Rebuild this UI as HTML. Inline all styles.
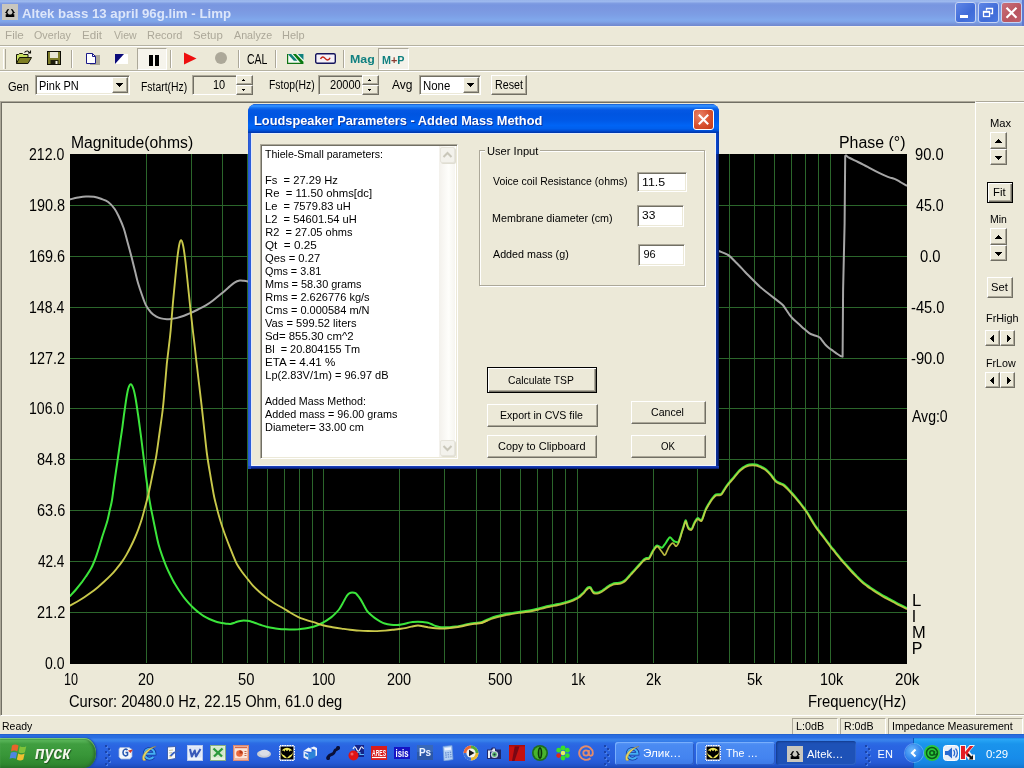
<!DOCTYPE html>
<html lang="en"><head><meta charset="utf-8"><title>Altek bass 13 april 96g.lim - Limp</title>
<style>

html,body{margin:0;padding:0}
body{width:1024px;height:768px;position:relative;overflow:hidden;background:#ECE9D8;font-family:"Liberation Sans",sans-serif;font-size:11px;color:#000}
div,span,svg{position:absolute;box-sizing:border-box}
.t{white-space:pre;transform-origin:0 50%;display:block}
/* classic raised button */
.btn{background:#ECE9D8;border:1px solid;border-color:#fff #716F64 #716F64 #fff;box-shadow:inset -1px -1px 0 #ACA899}
.btnd{background:#ECE9D8;border:1px solid #000;box-shadow:inset 1px 1px 0 #fff,inset -1px -1px 0 #716F64,inset -2px -2px 0 #ACA899}
.sunk{border:1px solid;border-color:#ACA899 #fff #fff #ACA899;box-shadow:inset 1px 1px 0 #716F64,inset -1px -1px 0 #ECE9D8}
.sunk1{border:1px solid;border-color:#ACA899 #fff #fff #ACA899}
.sep{width:2px;border-left:1px solid #ACA899;border-right:1px solid #fff}
.sh{text-shadow:1px 1px 0 #0C36A0}
.sh2{text-shadow:1px 1px 1px #1C501C}
.arr{width:0;height:0;border:4px solid transparent}

</style></head>
<body>
<div id="screen" style="left:0;top:0;width:1024px;height:768px;will-change:transform">
<div id="titlebar" style="left:0;top:0;width:1024px;height:26px;background:linear-gradient(#98B4EA 0,#9CB8EE 1.500px,#7F9CE2 3.500px,#7896E0 5px,#7B98E1 10px,#7D9EE5 15px,#80A8EC 20px,#7DA2E6 22px,#7792D8 24px,#6E88CE 26px)">
<div style="left:2px;top:4px;width:16px;height:16px;background:#C8C6BE"></div>
<svg style="left:2px;top:4px" width="16" height="16" viewBox="0 0 16 16"><path d="M6.800 5.600C4.600 5.400 5.400 8 4.300 8.500 5.400 9.200 5.200 10.400 6.400 11H4.400v1.200H7.300V10.600M9.200 5.600c2.200-.2 1.400 2.400 2.500 2.900-1.100.7-.9 1.900-2.100 2.500h2V12.200H8.700V10.600" fill="none" stroke="#000" stroke-width="1.400"/></svg>
<span class="t" style="left:22.3px;top:6px;font-size:13.5px;line-height:15px;font-weight:bold;color:#DCE6FA;transform:scaleX(0.9811);">Altek bass 13 april 96g.lim - Limp</span>
<div style="left:955px;top:2px;width:21px;height:21px;border:1px solid #C5D3F3;border-radius:3px;background:linear-gradient(135deg,#5F86E6,#3F6BD8 60%,#4A78E0)"></div>
<div style="left:978px;top:2px;width:21px;height:21px;border:1px solid #C5D3F3;border-radius:3px;background:linear-gradient(135deg,#5F86E6,#3F6BD8 60%,#4A78E0)"></div>
<div style="left:1001px;top:2px;width:21px;height:21px;border:1px solid #C5D3F3;border-radius:3px;background:linear-gradient(135deg,#C9707A,#B95560 60%,#C0606A)"></div>
<div style="left:960px;top:15px;width:8px;height:3px;background:#fff"></div>
<svg style="left:978px;top:3px" width="21" height="21"><path d="M8.500 7.500V5.500h6v5h-2" fill="none" stroke="#fff" stroke-width="1.300"/><rect x="5.500" y="8.500" width="6" height="5" fill="none" stroke="#fff" stroke-width="1.300"/><path d="M5.500 9h6" stroke="#fff" stroke-width="1.600"/></svg>
<svg style="left:1001px;top:3px" width="21" height="21"><path d="M5.500 4.800l10 10M15.500 4.800l-10 10" stroke="#fff" stroke-width="2.200"/></svg>
<div style="left:1022px;top:0;width:2px;height:26px;background:#5D79CF"></div>
</div>
<div style="left:0;top:26px;width:1024px;height:1px;background:#F4F0E8"></div>
<div id="menubar" style="left:0;top:26px;width:1024px;height:20px">
<span class="t" style="left:4.94px;top:3px;font-size:11px;line-height:12px;color:#ACA899;transform:scaleX(1.0625);">File</span>
<span class="t" style="left:34px;top:3px;font-size:11px;line-height:12px;color:#ACA899;transform:scaleX(0.9737);">Overlay</span>
<span class="t" style="left:81.94px;top:3px;font-size:11px;line-height:12px;color:#ACA899;transform:scaleX(1.0556);">Edit</span>
<span class="t" style="left:114px;top:3px;font-size:11px;line-height:12px;color:#ACA899;transform:scaleX(0.9583);">View</span>
<span class="t" style="left:147px;top:3px;font-size:11px;line-height:12px;color:#ACA899;">Record</span>
<span class="t" style="left:192.96px;top:3px;font-size:11px;line-height:12px;color:#ACA899;transform:scaleX(1.0370);">Setup</span>
<span class="t" style="left:234px;top:3px;font-size:11px;line-height:12px;color:#ACA899;transform:scaleX(0.9744);">Analyze</span>
<span class="t" style="left:282px;top:3px;font-size:11px;line-height:12px;color:#ACA899;">Help</span>
</div>
<div style="left:0;top:46px;width:1024px;height:1px;background:#fff"></div>
<div style="left:0;top:45px;width:1024px;height:1px;background:#B4B1A1"></div>
<div id="toolbar1" style="left:0;top:47px;width:1024px;height:24px">
<div style="left:3px;top:2px;width:3px;height:20px;border-left:1px solid #fff;border-right:1px solid #ACA899"></div>
<svg style="left:15px;top:3px" width="18" height="15" viewBox="0 0 18 15"><path d="M1.500 13.500V4.500h2l1-1h3l1 1h4.500v2.500" fill="#C8E060" stroke="#141408" stroke-width="1"/><path d="M1.500 13.500l3-6h12l-3.500 6z" fill="#7E7E22" stroke="#141408" stroke-width="1"/><path d="M9.500 2.500c1.500-2 3.800-2 5 0M15.500 .5v2.500h-2.500" fill="none" stroke="#101008" stroke-width="1.100"/></svg>
<svg style="left:47px;top:4px" width="14" height="14" viewBox="0 0 14 14"><rect x=".5" y=".5" width="13" height="13" fill="#7C7C28" stroke="#0C0C04"/><rect x="3" y="1" width="8" height="6" fill="#E8E6D4"/><rect x="3.500" y="9" width="8" height="4.500" fill="#1C1C0C"/><rect x="8.500" y="10" width="2" height="3" fill="#F4F2E4"/></svg>
<div class="sep" style="left:71px;top:3px;height:18px"></div>
<svg style="left:85px;top:5px" width="16" height="14" viewBox="0 0 16 14"><rect x="5" y="3" width="10" height="10" fill="#ACA899"/><path d="M1.500 1.500h6l3 3v7h-9z" fill="#fff" stroke="#1a1a8a"/><path d="M7.500 1.500v3h3" fill="none" stroke="#1a1a8a"/></svg>
<svg style="left:115px;top:7px" width="13" height="10" viewBox="0 0 13 10"><rect width="13" height="10" fill="#fff"/><path d="M0 0h9L0 10z" fill="#0A0A7A"/></svg>
<div style="left:137px;top:1px;width:30px;height:22px;border:1px solid;border-color:#ACA899 #fff #fff #ACA899;background:#F6F4EC"></div>
<div style="left:149px;top:8px;width:4px;height:11px;background:#000"></div><div style="left:155px;top:8px;width:4px;height:11px;background:#000"></div>
<div class="sep" style="left:170px;top:3px;height:18px"></div>
<svg style="left:184px;top:5px" width="13" height="13"><path d="M0 .5l12.500 6L0 12.500z" fill="#EE0F0F"/></svg>
<div style="left:215px;top:5px;width:12px;height:12px;border-radius:6px;background:#ACA899"></div>
<div class="sep" style="left:238px;top:3px;height:18px"></div>
<span class="t" style="left:246.85px;top:4px;font-size:14px;line-height:16px;transform:scaleX(0.7500);">CAL</span>
<div class="sep" style="left:275px;top:3px;height:18px"></div>
<svg style="left:287px;top:7px" width="17" height="10" viewBox="0 0 17 10"><rect width="17" height="10" fill="#F4FAF4"/><path d="M.8 0h3.400l6.200 6.700H6.800z" fill="#108078"/><path d="M5.800 0h3.200l7.500 7.800V10h-2z" fill="#0C7A10"/><path d="M10.800 0H16.500v6z" fill="#10807C"/><path d="M.6 0v9.400H15" fill="none" stroke="#107414" stroke-width="1.200"/></svg>
<svg style="left:315px;top:6px" width="21" height="11" viewBox="0 0 21 11"><rect x=".7" y=".7" width="19.600" height="9.600" rx="1.500" fill="#F5F1F8" stroke="#14145C" stroke-width="1.400"/><path d="M5.500 6c1.200-2.600 3-2.600 4.600-.6s3.600 2.400 5-.6" fill="none" stroke="#C42414" stroke-width="1.400"/></svg>
<div class="sep" style="left:343px;top:3px;height:18px"></div>
<span class="t" style="left:349.88px;top:6px;font-size:11px;line-height:12px;font-weight:bold;color:#108080;transform:scaleX(1.1250);">Mag</span>
<div style="left:378px;top:1px;width:31px;height:22px;border:1px solid;border-color:#ACA899 #fff #fff #ACA899;background:#F4F2EA"></div>
<span class="t" style="left:382.42px;top:7px;font-size:11px;line-height:12px;font-weight:bold;color:#108080;transform:scaleX(0.9818);">M<span style="position:static;color:#8A3A30">+</span>P</span>
</div>
<div style="left:0;top:71px;width:1024px;height:1px;background:#fff"></div>
<div style="left:0;top:70px;width:1024px;height:1px;background:#B4B1A1"></div>
<div id="toolbar2" style="left:0;top:72px;width:1024px;height:28px">
<span class="t" style="left:7.81px;top:8px;font-size:12.5px;line-height:14px;transform:scaleX(0.8864);">Gen</span>
<div class="sunk" style="left:35px;top:3px;width:95px;height:20px;background:#fff"></div>
<span class="t" style="left:38.62px;top:7px;font-size:12.5px;line-height:14px;transform:scaleX(0.8791);">Pink PN</span>
<div class="btn" style="left:112px;top:5px;width:16px;height:16px"></div><div style="left:116px;top:11px;width:7px;height:1px;background:#000"></div><div style="left:117px;top:12px;width:5px;height:1px;background:#000"></div><div style="left:118px;top:13px;width:3px;height:1px;background:#000"></div><div style="left:119px;top:14px;width:1px;height:1px;background:#000"></div>
<span class="t" style="left:140.67px;top:8px;font-size:12.5px;line-height:14px;transform:scaleX(0.8333);">Fstart(Hz)</span>
<div class="sunk" style="left:192px;top:3px;width:45px;height:20px"></div>
<span class="t" style="left:212.82px;top:6px;font-size:12.5px;line-height:14px;transform:scaleX(0.8769);">10</span>
<div class="btn" style="left:236px;top:3px;width:17px;height:10px"></div><div class="btn" style="left:236px;top:13px;width:17px;height:10px"></div>
<div style="left:243px;top:7px;width:1px;height:1px;background:#000"></div><div style="left:242px;top:8px;width:3px;height:1px;background:#000"></div><div style="left:242px;top:17px;width:3px;height:1px;background:#000"></div><div style="left:243px;top:18px;width:1px;height:1px;background:#000"></div>
<span class="t" style="left:269.07px;top:6px;font-size:12.5px;line-height:14px;transform:scaleX(0.8321);">Fstop(Hz)</span>
<div class="sunk" style="left:318px;top:3px;width:46px;height:20px"></div>
<span class="t" style="left:330.32px;top:6px;font-size:12.5px;line-height:14px;transform:scaleX(0.8848);">20000</span>
<div class="btn" style="left:362px;top:3px;width:17px;height:10px"></div><div class="btn" style="left:362px;top:13px;width:17px;height:10px"></div>
<div style="left:369px;top:7px;width:1px;height:1px;background:#000"></div><div style="left:368px;top:8px;width:3px;height:1px;background:#000"></div><div style="left:368px;top:17px;width:3px;height:1px;background:#000"></div><div style="left:369px;top:18px;width:1px;height:1px;background:#000"></div>
<span class="t" style="left:392px;top:6px;font-size:12.5px;line-height:14px;transform:scaleX(0.9600);">Avg</span>
<div class="sunk" style="left:419px;top:3px;width:62px;height:20px;background:#fff"></div>
<span class="t" style="left:422.59px;top:7px;font-size:12.5px;line-height:14px;transform:scaleX(0.9143);">None</span>
<div class="btn" style="left:463px;top:5px;width:16px;height:16px"></div><div style="left:467px;top:11px;width:7px;height:1px;background:#000"></div><div style="left:468px;top:12px;width:5px;height:1px;background:#000"></div><div style="left:469px;top:13px;width:3px;height:1px;background:#000"></div><div style="left:470px;top:14px;width:1px;height:1px;background:#000"></div>
<div class="btn" style="left:491px;top:3px;width:36px;height:20px"></div>
<span class="t" style="left:494.74px;top:6px;font-size:12.5px;line-height:14px;transform:scaleX(0.8562);">Reset</span>
</div>
<div id="view" style="left:0;top:101px;width:976px;height:615px;border:1px solid;border-color:#ACA899 #fff #fff #ACA899;box-shadow:inset 1px 1px 0 #716F64"></div>
<div style="left:976px;top:101px;width:48px;height:1px;background:#ACA899"></div><div style="left:976px;top:102px;width:48px;height:1px;background:#fff"></div>
<div style="left:976px;top:714px;width:48px;height:1px;background:#ACA899"></div><div style="left:976px;top:715px;width:48px;height:1px;background:#fff"></div>
<div id="side" style="left:976px;top:102px;width:48px;height:612px">
<span class="t" style="left:13.68px;top:15px;font-size:11px;line-height:12px;transform:scaleX(1.0158);">Max</span>
<div class="btn" style="left:14px;top:30px;width:17px;height:17px"></div><div class="btn" style="left:14px;top:47px;width:17px;height:16px"></div>
<div style="left:22px;top:37px;width:1px;height:1px;background:#000"></div><div style="left:21px;top:38px;width:3px;height:1px;background:#000"></div><div style="left:20px;top:39px;width:5px;height:1px;background:#000"></div><div style="left:19px;top:40px;width:7px;height:1px;background:#000"></div><div style="left:19px;top:54px;width:7px;height:1px;background:#000"></div><div style="left:20px;top:55px;width:5px;height:1px;background:#000"></div><div style="left:21px;top:56px;width:3px;height:1px;background:#000"></div><div style="left:22px;top:57px;width:1px;height:1px;background:#000"></div>
<div class="btnd" style="left:11px;top:80px;width:26px;height:21px"></div>
<span class="t" style="left:16.67px;top:84px;font-size:11px;line-height:12px;transform:scaleX(1.0273);">Fit</span>
<span class="t" style="left:14.05px;top:111px;font-size:11px;line-height:12px;transform:scaleX(0.9500);">Min</span>
<div class="btn" style="left:14px;top:126px;width:17px;height:17px"></div><div class="btn" style="left:14px;top:143px;width:17px;height:16px"></div>
<div style="left:22px;top:133px;width:1px;height:1px;background:#000"></div><div style="left:21px;top:134px;width:3px;height:1px;background:#000"></div><div style="left:20px;top:135px;width:5px;height:1px;background:#000"></div><div style="left:19px;top:136px;width:7px;height:1px;background:#000"></div><div style="left:19px;top:150px;width:7px;height:1px;background:#000"></div><div style="left:20px;top:151px;width:5px;height:1px;background:#000"></div><div style="left:21px;top:152px;width:3px;height:1px;background:#000"></div><div style="left:22px;top:153px;width:1px;height:1px;background:#000"></div>
<div class="btn" style="left:11px;top:175px;width:26px;height:21px"></div>
<span class="t" style="left:14.98px;top:179px;font-size:11px;line-height:12px;transform:scaleX(1.0200);">Set</span>
<span class="t" style="left:9.81px;top:210px;font-size:11px;line-height:12px;transform:scaleX(0.9871);">FrHigh</span>
<div class="btn" style="left:9px;top:228px;width:15px;height:16px"></div><div class="btn" style="left:24px;top:228px;width:15px;height:16px"></div>
<div style="left:14px;top:236px;width:1px;height:1px;background:#000"></div><div style="left:15px;top:235px;width:1px;height:3px;background:#000"></div><div style="left:16px;top:234px;width:1px;height:5px;background:#000"></div><div style="left:17px;top:233px;width:1px;height:7px;background:#000"></div><div style="left:31px;top:233px;width:1px;height:7px;background:#000"></div><div style="left:32px;top:234px;width:1px;height:5px;background:#000"></div><div style="left:33px;top:235px;width:1px;height:3px;background:#000"></div><div style="left:34px;top:236px;width:1px;height:1px;background:#000"></div>
<span class="t" style="left:9.83px;top:255px;font-size:11px;line-height:12px;transform:scaleX(0.9724);">FrLow</span>
<div class="btn" style="left:9px;top:270px;width:15px;height:16px"></div><div class="btn" style="left:24px;top:270px;width:15px;height:16px"></div>
<div style="left:14px;top:278px;width:1px;height:1px;background:#000"></div><div style="left:15px;top:277px;width:1px;height:3px;background:#000"></div><div style="left:16px;top:276px;width:1px;height:5px;background:#000"></div><div style="left:17px;top:275px;width:1px;height:7px;background:#000"></div><div style="left:31px;top:275px;width:1px;height:7px;background:#000"></div><div style="left:32px;top:276px;width:1px;height:5px;background:#000"></div><div style="left:33px;top:277px;width:1px;height:3px;background:#000"></div><div style="left:34px;top:278px;width:1px;height:1px;background:#000"></div>
</div>
<div id="statusbar" style="left:0;top:716px;width:1024px;height:18px">
<span class="t" style="left:1.55px;top:4px;font-size:11px;line-height:12px;transform:scaleX(0.9516);">Ready</span>
<div class="sunk1" style="left:792px;top:2px;width:46px;height:17px"></div>
<span class="t" style="left:795.72px;top:4px;font-size:11px;line-height:12px;transform:scaleX(0.9815);">L:0dB</span>
<div class="sunk1" style="left:840px;top:2px;width:46px;height:17px"></div>
<span class="t" style="left:843.83px;top:4px;font-size:11px;line-height:12px;transform:scaleX(0.9655);">R:0dB</span>
<div class="sunk1" style="left:888px;top:2px;width:135px;height:17px"></div>
<span class="t" style="left:891.73px;top:4px;font-size:11px;line-height:12px;transform:scaleX(0.9677);">Impedance Measurement</span>
</div>
<div id="graph" style="left:70px;top:154px;width:837px;height:510px;background:#000"></div>
<svg id="plot" style="left:0;top:0" width="1024" height="768" viewBox="0 0 1024 768">
<clipPath id="gc"><rect x="70" y="154" width="837" height="509"/></clipPath>
<g clip-path="url(#gc)" fill="none" stroke-linejoin="round" stroke-linecap="round">
<path d="M146.5 154 V663 M191.5 154 V663 M222.5 154 V663 M247.5 154 V663 M267.5 154 V663 M284.5 154 V663 M299.5 154 V663 M312.5 154 V663 M323.5 154 V663 M399.5 154 V663 M444.5 154 V663 M476.5 154 V663 M500.5 154 V663 M520.5 154 V663 M537.5 154 V663 M552.5 154 V663 M565.5 154 V663 M577.5 154 V663 M653.5 154 V663 M697.5 154 V663 M729.5 154 V663 M754.5 154 V663 M774.5 154 V663 M791.5 154 V663 M805.5 154 V663 M818.5 154 V663 M830.5 154 V663 M70 205.5 H907 M70 256.5 H907 M70 307.5 H907 M70 358.5 H907 M70 408.5 H907 M70 459.5 H907 M70 510.5 H907 M70 561.5 H907 M70 612.5 H907" stroke="#2B662B" stroke-width="1" shape-rendering="crispEdges"/>
<path d="M70.0 199.4C71.3 199.1 75.3 198.1 78.0 197.6C80.7 197.1 83.3 196.6 86.0 196.5C88.7 196.4 91.5 196.4 94.0 196.8C96.5 197.2 98.6 197.9 101.0 198.8C103.4 199.7 105.9 200.3 108.2 202.0C110.5 203.7 112.9 206.5 114.7 209.0C116.5 211.5 117.5 213.8 119.0 217.0C120.5 220.2 122.4 224.3 123.8 228.5C125.2 232.7 126.2 237.2 127.5 242.0C128.8 246.8 130.3 252.4 131.6 257.2C132.8 262.0 133.9 266.7 135.0 271.0C136.1 275.3 136.9 279.2 138.1 283.2C139.3 287.2 140.7 291.3 142.0 295.0C143.3 298.7 144.5 302.5 146.0 305.4C147.5 308.3 149.3 310.6 151.0 312.5C152.7 314.4 154.7 315.6 156.4 316.6C158.1 317.6 159.3 318.0 161.0 318.4C162.7 318.8 165.0 319.1 166.8 319.2C168.6 319.3 170.3 319.0 172.0 318.8C173.7 318.6 175.2 318.4 177.2 317.9C179.2 317.4 181.8 316.5 184.0 315.7C186.2 314.9 187.9 314.2 190.2 313.2C192.5 312.2 195.4 310.8 198.0 309.5C200.6 308.2 203.3 306.9 205.8 305.4C208.3 303.9 210.4 302.5 213.0 300.5C215.6 298.5 219.0 295.7 221.5 293.6C224.0 291.5 225.8 289.8 228.0 288.0C230.2 286.2 232.6 283.9 234.5 282.7C236.4 281.5 238.1 280.9 239.7 280.6C241.3 280.3 242.3 280.6 244.0 280.8C245.7 281.0 249.0 281.8 250.0 282.0" stroke="#A6A6A6" stroke-width="2"/>
<path d="M712.0 249.0C713.2 249.4 716.8 250.3 719.5 251.3C722.2 252.3 725.6 253.3 728.4 255.2C731.1 257.1 733.2 259.8 736.0 262.5C738.8 265.2 742.2 268.9 744.9 271.7C747.6 274.4 749.5 276.5 752.0 279.0C754.5 281.5 757.4 284.4 759.9 286.7C762.4 288.9 764.5 290.5 767.0 292.5C769.5 294.5 772.2 296.6 774.8 298.6C777.3 300.6 780.4 302.8 782.3 304.6C784.2 306.4 784.8 307.8 786.0 309.5C787.2 311.2 788.5 313.4 789.8 315.1C791.1 316.8 792.5 318.3 794.0 319.8C795.5 321.3 797.1 322.6 798.8 324.1C800.5 325.6 802.3 327.3 804.0 328.8C805.7 330.3 807.5 332.0 809.2 333.1C810.9 334.2 812.2 334.5 814.0 335.2C815.8 335.9 818.3 336.5 819.7 337.5C821.1 338.5 821.5 339.8 822.5 341.0C823.5 342.2 824.6 343.8 825.7 345.0C826.8 346.2 827.8 347.0 829.0 348.0C830.2 349.0 831.9 350.0 833.2 351.0C834.5 352.0 835.8 352.9 837.0 353.8C838.2 354.7 839.8 355.6 840.7 356.1C841.6 356.6 842.3 356.5 842.6 356.6 L842.6 356.6L843.1 289.7L844.6 223.8L845.2 156.0L846.0 155.4 L846.0 155.4C846.6 155.8 847.7 156.9 849.7 158.0C851.7 159.1 855.0 160.5 858.0 162.0C861.0 163.5 864.6 165.3 867.6 166.9C870.6 168.5 873.0 169.8 876.0 171.3C879.0 172.8 883.3 174.9 885.6 175.9C887.9 176.9 888.5 177.1 890.0 177.6C891.5 178.1 892.8 178.2 894.5 178.9C896.2 179.6 898.0 180.7 900.0 181.8C902.0 182.9 905.4 184.9 906.5 185.5" stroke="#A6A6A6" stroke-width="2"/>
<path d="M70.0 596.0C71.0 594.9 74.0 591.9 76.0 589.5C78.0 587.1 80.3 584.2 82.1 581.9C83.8 579.6 85.0 577.8 86.5 575.6C88.0 573.4 89.8 570.8 91.0 568.6C92.2 566.4 92.9 564.7 93.8 562.5C94.7 560.3 95.6 557.9 96.5 555.3C97.4 552.7 98.3 550.0 99.2 547.0C100.1 544.0 101.1 540.6 102.0 537.6C102.9 534.6 103.9 532.0 104.8 529.0C105.7 526.0 106.8 523.1 107.6 519.9C108.4 516.7 109.1 513.3 109.8 510.0C110.5 506.7 111.1 505.3 112.0 500.0C112.9 494.7 114.0 484.9 115.0 478.0C116.0 471.1 116.9 464.9 117.8 458.9C118.7 452.9 119.4 447.4 120.2 442.0C121.0 436.6 121.8 431.6 122.5 426.4C123.2 421.2 123.8 415.7 124.5 411.0C125.2 406.3 125.8 401.9 126.4 398.2C127.0 394.4 127.6 390.8 128.3 388.5C129.0 386.2 130.0 384.2 130.8 384.2C131.6 384.2 132.5 386.2 133.3 388.5C134.1 390.8 134.7 393.6 135.5 398.0C136.3 402.4 137.2 409.0 138.1 415.0C139.0 421.0 139.9 428.4 140.7 434.2C141.5 440.0 142.0 444.8 142.7 450.0C143.3 455.2 144.0 460.4 144.6 465.4C145.2 470.4 145.8 475.2 146.5 480.0C147.2 484.8 147.8 489.5 148.5 494.0C149.2 498.5 150.0 503.1 150.7 507.0C151.4 510.9 152.1 513.6 152.9 517.7C153.7 521.8 154.8 527.1 155.7 531.5C156.6 535.9 157.4 540.1 158.5 544.2C159.6 548.3 161.0 552.5 162.3 556.2C163.6 559.9 164.8 563.1 166.2 566.4C167.6 569.7 169.1 572.8 170.6 575.8C172.1 578.8 173.5 581.6 175.0 584.1C176.5 586.6 177.9 588.8 179.4 591.0C180.9 593.2 182.4 595.4 183.9 597.3C185.4 599.2 186.8 600.9 188.3 602.6C189.8 604.3 191.0 605.7 192.7 607.3C194.3 608.9 196.3 610.6 198.2 612.1C200.0 613.6 202.0 615.1 203.8 616.2C205.7 617.4 207.5 618.2 209.3 619.0C211.2 619.8 213.2 620.6 214.9 621.2C216.6 621.8 217.8 622.1 219.3 622.4C220.8 622.7 222.4 623.0 223.7 623.2C225.0 623.4 225.9 623.6 227.0 623.7C228.1 623.8 229.3 624.0 230.4 623.9C231.5 623.8 232.6 623.4 233.7 623.0C234.8 622.6 235.9 622.1 237.0 621.7C238.1 621.4 239.2 621.1 240.3 620.9C241.4 620.7 242.5 620.6 243.6 620.6C244.7 620.6 245.9 620.6 247.0 620.7C248.1 620.8 248.9 620.8 250.3 621.2C251.7 621.6 253.6 622.4 255.3 623.0C257.0 623.6 258.4 624.2 260.3 624.8C262.2 625.4 264.4 626.2 266.5 626.7C268.6 627.2 270.9 627.7 273.0 628.1C275.1 628.5 277.2 628.7 279.3 628.9C281.4 629.1 283.6 629.2 285.7 629.3C287.8 629.4 289.9 629.5 292.0 629.5C294.1 629.5 296.3 629.4 298.4 629.3C300.5 629.1 302.7 628.9 304.8 628.6C306.9 628.3 309.2 627.8 311.1 627.3C313.0 626.8 314.5 626.3 316.2 625.7C317.9 625.1 319.6 624.4 321.3 623.5C323.0 622.6 324.7 621.7 326.4 620.6C328.1 619.5 329.9 618.3 331.4 617.1C332.9 615.9 333.9 614.9 335.2 613.6C336.5 612.3 337.9 610.9 339.0 609.5C340.1 608.1 340.8 606.8 341.6 605.3C342.5 603.8 343.3 602.1 344.1 600.6C344.9 599.1 345.8 597.4 346.6 596.2C347.5 595.0 348.2 594.0 349.2 593.4C350.1 592.8 351.2 592.4 352.3 592.4C353.4 592.4 354.6 592.6 355.5 593.2C356.4 593.8 357.1 594.8 358.0 595.8C358.9 596.8 359.6 597.8 360.6 599.4C361.6 601.0 362.7 603.3 363.8 605.2C364.9 607.1 365.8 609.2 367.0 610.8C368.2 612.4 369.5 613.6 370.8 614.8C372.1 616.0 373.1 616.8 374.6 617.9C376.1 619.0 377.9 620.2 379.6 621.1C381.3 622.0 382.8 622.9 384.7 623.5C386.6 624.1 388.9 624.5 391.0 624.7C393.1 625.0 395.5 625.1 397.4 625.0C399.3 624.9 400.8 624.5 402.5 624.2C404.2 623.9 405.9 623.4 407.6 623.0C409.3 622.6 411.0 622.3 412.7 622.1C414.4 621.9 416.1 621.7 417.8 621.7C419.5 621.7 421.1 621.8 422.8 622.0C424.5 622.2 426.4 622.3 427.9 622.7C429.4 623.1 430.4 623.8 431.7 624.3C433.0 624.8 434.2 625.6 435.5 626.0C436.8 626.4 438.0 626.7 439.3 626.9C440.6 627.1 441.5 627.2 443.2 627.3C444.9 627.3 447.4 627.3 449.5 627.2C451.6 627.1 453.8 626.9 455.9 626.6C458.0 626.3 459.9 625.8 462.0 625.4C464.1 625.0 466.3 624.4 468.5 624.0C470.7 623.6 472.9 623.3 475.0 623.0C477.1 622.7 479.2 622.8 481.2 622.2C483.2 621.7 485.0 620.5 487.0 619.7C489.0 618.9 490.9 618.0 493.0 617.3C495.1 616.6 497.3 616.0 499.5 615.5C501.7 615.0 503.8 614.4 506.0 614.0C508.2 613.6 510.3 613.2 512.5 612.9C514.7 612.5 516.8 612.2 519.0 611.9C521.2 611.6 523.3 611.4 525.5 611.1C527.7 610.8 529.9 610.5 532.1 610.1C534.3 609.7 536.3 609.1 538.5 608.5C540.7 607.9 542.9 607.2 545.1 606.7C547.3 606.2 549.3 605.7 551.5 605.3C553.7 604.9 555.9 604.6 558.1 604.1C560.3 603.6 562.3 603.0 564.5 602.4C566.7 601.8 569.4 601.0 571.1 600.4C572.9 599.8 573.7 599.4 575.0 598.7C576.3 598.1 577.8 597.2 578.9 596.5C580.0 595.8 580.6 595.1 581.5 594.3C582.4 593.5 583.4 592.6 584.1 591.8C584.9 591.0 585.4 590.0 586.0 589.3C586.6 588.6 587.5 587.8 588.0 587.4C588.5 587.0 588.9 587.0 589.3 587.0C589.7 587.0 590.2 586.9 590.6 587.4C591.0 587.9 591.5 589.0 591.9 589.7C592.3 590.4 592.7 591.3 593.2 591.8C593.7 592.3 594.4 592.5 595.0 592.6C595.6 592.7 596.3 592.7 597.1 592.6C597.9 592.5 598.8 592.2 599.7 591.8C600.6 591.5 601.4 591.0 602.3 590.5C603.2 590.0 604.1 589.1 605.0 588.5C605.9 587.9 606.5 587.2 607.5 586.6C608.5 586.0 609.6 585.2 610.7 584.7C611.8 584.2 612.9 583.6 614.0 583.3C615.1 583.0 616.2 583.1 617.3 583.0C618.4 582.9 619.6 582.8 620.6 582.5C621.6 582.2 622.3 581.8 623.2 581.3C624.1 580.8 624.9 580.2 625.8 579.4C626.7 578.6 627.5 577.6 628.4 576.6C629.3 575.6 630.1 574.6 631.0 573.6C631.9 572.6 632.7 571.8 633.6 570.8C634.5 569.9 635.2 569.0 636.2 567.9C637.2 566.8 638.4 565.5 639.5 564.3C640.6 563.1 641.8 561.5 642.7 560.6C643.6 559.7 644.1 559.3 644.7 558.9C645.4 558.5 646.1 558.1 646.6 558.0C647.1 557.9 647.5 558.1 647.9 558.0C648.3 557.9 648.7 558.2 649.2 557.6C649.7 557.0 650.5 555.3 651.1 554.1C651.8 552.9 652.5 551.3 653.1 550.2C653.8 549.1 654.4 548.1 655.0 547.3C655.6 546.5 656.2 545.6 657.0 545.5C657.8 545.4 658.7 546.4 659.6 546.7C660.5 547.1 661.4 547.9 662.2 547.6C663.0 547.3 663.6 546.0 664.2 545.1C664.9 544.2 665.5 543.4 666.1 542.4C666.7 541.4 667.4 540.3 668.0 539.4C668.6 538.5 669.3 537.2 670.0 537.2C670.7 537.2 671.4 538.5 672.0 539.1C672.6 539.8 673.2 540.6 673.9 541.1C674.6 541.6 675.4 541.8 676.0 542.0C676.6 542.2 677.4 542.3 677.8 542.4C678.2 542.5 677.9 543.2 678.3 542.4C678.7 541.6 679.4 539.3 680.0 537.6C680.6 535.9 681.1 533.9 681.7 532.0C682.3 530.1 683.0 528.0 683.6 526.1C684.2 524.2 685.1 520.7 685.6 520.3C686.1 519.9 686.5 522.4 686.9 523.6C687.3 524.8 687.7 526.5 688.2 527.3C688.7 528.2 689.3 528.4 689.8 528.7C690.3 529.0 690.8 529.2 691.3 528.9C691.8 528.6 692.2 528.0 692.6 527.1C693.0 526.2 693.4 524.9 693.9 523.7C694.4 522.5 695.1 521.1 695.8 520.1C696.4 519.1 697.1 518.1 697.8 518.0C698.4 517.9 699.1 519.0 699.7 519.3C700.4 519.6 701.1 520.5 701.7 519.8C702.4 519.1 703.0 516.8 703.6 515.1C704.2 513.4 704.8 511.2 705.6 509.4C706.4 507.7 707.3 506.1 708.2 504.6C709.1 503.1 709.9 501.6 710.8 500.3C711.7 499.0 712.5 497.9 713.4 496.9C714.3 495.9 715.1 494.9 716.0 494.5C716.9 494.1 717.7 494.3 718.6 494.2C719.5 494.1 720.3 494.5 721.2 493.8C722.1 493.1 722.9 491.4 723.8 490.1C724.7 488.8 725.4 487.4 726.4 486.0C727.4 484.6 728.5 483.2 729.6 481.9C730.7 480.6 731.8 479.4 732.9 478.1C734.0 476.8 735.1 475.4 736.2 474.1C737.3 472.8 738.4 471.4 739.5 470.3C740.6 469.2 741.6 468.4 742.7 467.6C743.8 466.8 744.9 466.1 746.0 465.6C747.1 465.1 748.1 464.8 749.2 464.6C750.3 464.4 751.4 464.3 752.5 464.3C753.6 464.3 754.6 464.4 755.7 464.6C756.8 464.8 757.9 465.2 759.0 465.6C760.1 466.0 761.1 466.5 762.2 467.1C763.3 467.7 764.5 468.3 765.5 469.0C766.5 469.7 767.2 470.5 768.1 471.4C769.0 472.3 769.8 473.2 770.7 474.2C771.6 475.2 772.4 476.5 773.3 477.6C774.2 478.7 774.8 479.8 775.9 480.7C777.0 481.6 778.5 482.3 779.8 482.9C781.1 483.6 782.4 483.7 783.7 484.6C785.0 485.5 786.3 487.0 787.6 488.3C788.9 489.6 790.2 491.1 791.5 492.5C792.8 493.9 794.1 495.4 795.4 496.9C796.7 498.4 798.0 500.0 799.3 501.6C800.6 503.2 801.9 505.0 803.2 506.7C804.5 508.4 805.8 510.0 807.1 512.0C808.4 514.0 809.7 516.4 811.0 518.6C812.3 520.8 813.6 523.0 814.9 525.0C816.2 527.0 817.5 528.6 818.8 530.3C820.1 532.0 821.4 533.7 822.7 535.4C824.0 537.1 825.3 538.9 826.6 540.6C827.9 542.3 829.0 543.9 830.5 545.8C832.0 547.8 834.0 550.1 835.7 552.3C837.5 554.5 839.2 556.7 841.0 558.8C842.8 560.9 844.5 562.8 846.2 564.7C847.9 566.7 849.7 568.6 851.4 570.5C853.1 572.4 854.9 574.1 856.6 575.9C858.3 577.6 860.1 579.5 861.8 581.0C863.5 582.5 865.3 583.8 867.0 585.1C868.7 586.4 870.5 587.6 872.2 588.8C873.9 590.0 875.7 591.0 877.4 592.1C879.1 593.2 880.9 594.3 882.6 595.3C884.3 596.3 886.1 597.2 887.8 598.2C889.5 599.2 891.0 600.0 893.0 601.0C895.0 602.0 897.2 603.3 899.5 604.4C901.8 605.5 905.3 607.2 906.5 607.8" stroke="#3BE53B" stroke-width="2"/>
<path d="M70.0 605.6C71.2 605.0 74.6 603.2 77.0 601.8C79.4 600.4 82.0 598.8 84.3 597.3C86.6 595.8 88.8 594.2 91.0 592.6C93.2 591.0 95.4 589.2 97.6 587.4C99.8 585.6 101.8 583.8 104.0 581.8C106.2 579.8 108.8 577.4 110.9 575.2C113.0 573.0 114.7 571.0 116.5 568.8C118.3 566.6 120.2 564.3 121.9 561.9C123.6 559.5 125.0 557.2 126.5 554.6C128.0 552.0 129.4 549.3 130.8 546.5C132.2 543.7 133.5 541.0 134.8 538.0C136.1 535.0 137.3 532.0 138.5 528.8C139.7 525.5 140.9 522.2 142.0 518.5C143.1 514.8 144.1 510.7 145.2 506.6C146.3 502.5 147.3 499.3 148.5 494.0C149.7 488.7 151.1 481.5 152.4 475.0C153.7 468.5 155.2 462.3 156.4 455.0C157.6 447.7 158.7 438.8 159.8 431.0C160.9 423.2 162.1 415.5 162.9 408.0C163.8 400.5 164.2 393.4 164.9 386.0C165.6 378.6 166.2 370.4 166.8 363.9C167.5 357.4 168.2 352.6 168.8 347.0C169.5 341.4 170.0 337.5 170.7 330.0C171.4 322.5 172.2 310.7 173.0 302.0C173.8 293.3 174.6 285.3 175.3 278.0C176.0 270.7 176.7 263.5 177.3 258.0C178.0 252.5 178.6 247.9 179.2 245.0C179.8 242.1 180.5 240.3 181.1 240.3C181.7 240.3 182.3 242.1 183.0 245.0C183.7 247.9 184.3 252.5 185.0 258.0C185.7 263.5 186.4 270.2 187.2 278.0C188.0 285.8 189.1 296.3 190.0 305.0C190.9 313.7 192.0 323.0 192.8 330.0C193.6 337.0 194.2 341.4 194.8 347.0C195.5 352.6 195.9 357.4 196.7 363.9C197.4 370.4 198.4 378.6 199.3 386.0C200.2 393.4 201.0 400.4 201.9 408.1C202.8 415.8 203.6 424.2 204.5 432.0C205.4 439.8 206.1 447.8 207.1 455.0C208.1 462.2 209.2 468.5 210.3 475.0C211.4 481.5 212.7 489.1 213.6 494.0C214.5 498.9 215.2 501.3 216.0 504.5C216.8 507.7 217.4 510.3 218.2 513.3C219.0 516.3 220.0 519.5 220.9 522.5C221.8 525.5 222.7 528.1 223.7 531.0C224.7 533.9 225.9 537.0 227.0 540.0C228.1 543.0 229.3 545.9 230.4 548.7C231.5 551.5 232.5 554.0 233.6 556.6C234.7 559.2 235.5 561.6 237.0 564.2C238.5 566.9 240.7 569.9 242.5 572.5C244.3 575.1 246.4 577.5 248.1 579.6C249.8 581.8 250.9 583.4 252.7 585.4C254.5 587.4 256.9 589.6 259.0 591.5C261.1 593.4 262.9 594.9 265.4 596.8C267.9 598.7 271.0 601.1 274.0 603.0C277.0 604.9 280.4 606.6 283.2 608.2C285.9 609.8 288.0 611.3 290.5 612.8C293.0 614.3 295.8 615.9 298.4 617.1C301.0 618.3 303.5 619.0 306.0 619.9C308.5 620.8 310.6 621.3 313.6 622.2C316.6 623.1 320.7 624.7 323.8 625.5C326.9 626.3 329.5 626.7 332.5 627.2C335.5 627.7 338.7 628.2 341.6 628.6C344.5 629.0 347.0 629.4 350.0 629.7C353.0 630.0 356.4 630.4 359.4 630.6C362.4 630.8 365.1 630.9 368.0 631.0C370.9 631.1 374.3 631.2 377.1 631.1C379.9 631.0 382.4 630.8 385.0 630.6C387.6 630.4 390.1 630.1 392.4 629.8C394.7 629.5 396.9 629.3 399.0 629.0C401.1 628.7 403.0 628.5 405.1 628.1C407.2 627.7 409.4 627.0 411.5 626.6C413.6 626.2 415.9 625.6 417.8 625.5C419.7 625.4 421.3 625.9 423.0 626.2C424.7 626.5 425.8 626.9 427.9 627.3C430.0 627.6 432.9 628.1 435.5 628.3C438.1 628.5 440.9 628.6 443.2 628.6C445.5 628.6 447.4 628.3 449.5 628.1C451.6 627.9 453.8 627.6 455.9 627.3C458.0 627.0 459.9 626.6 462.0 626.2C464.1 625.8 466.3 625.2 468.5 624.8C470.7 624.4 472.9 624.1 475.0 623.8C477.1 623.5 479.2 623.5 481.2 623.0C483.2 622.5 486.0 621.0 487.0 620.6" stroke="#C9C84A" stroke-width="1.900"/>
<path d="M481.2 623.2C482.2 622.8 485.0 621.6 487.0 620.8C489.0 620.0 490.9 619.1 493.0 618.4C495.1 617.7 497.3 617.2 499.5 616.6C501.7 616.0 503.8 615.5 506.0 615.1C508.2 614.7 510.3 614.4 512.5 614.0C514.7 613.6 516.8 613.3 519.0 613.0C521.2 612.7 523.3 612.5 525.5 612.2C527.7 611.9 529.9 611.6 532.1 611.2C534.3 610.8 536.3 610.2 538.5 609.6C540.7 609.0 542.9 608.3 545.1 607.8C547.3 607.3 549.3 606.8 551.5 606.4C553.7 606.0 555.9 605.7 558.1 605.2C560.3 604.7 562.3 604.1 564.5 603.5C566.7 602.9 569.4 602.1 571.1 601.5C572.9 600.9 573.7 600.5 575.0 599.8C576.3 599.2 577.8 598.3 578.9 597.6C580.0 596.9 580.6 596.2 581.5 595.4C582.4 594.6 583.4 593.7 584.1 592.9C584.9 592.1 585.4 591.1 586.0 590.4C586.6 589.7 587.5 588.9 588.0 588.5C588.5 588.1 588.9 588.1 589.3 588.1C589.7 588.1 590.2 588.0 590.6 588.5C591.0 589.0 591.5 590.1 591.9 590.8C592.3 591.5 592.7 592.4 593.2 592.9C593.7 593.4 594.4 593.6 595.0 593.7C595.6 593.8 596.3 593.8 597.1 593.7C597.9 593.6 598.8 593.3 599.7 592.9C600.6 592.6 601.4 592.2 602.3 591.6C603.2 591.0 604.1 590.2 605.0 589.6C605.9 589.0 606.5 588.3 607.5 587.7C608.5 587.1 609.6 586.4 610.7 585.8C611.8 585.3 612.9 584.7 614.0 584.4C615.1 584.1 616.2 584.2 617.3 584.1C618.4 584.0 619.6 583.9 620.6 583.6C621.6 583.3 622.3 582.9 623.2 582.4C624.1 581.9 624.9 581.3 625.8 580.5C626.7 579.7 627.5 578.7 628.4 577.7C629.3 576.7 630.1 575.7 631.0 574.7C631.9 573.7 632.7 572.9 633.6 571.9C634.5 571.0 635.2 570.1 636.2 569.0C637.2 567.9 638.4 566.6 639.5 565.4C640.6 564.2 641.8 562.6 642.7 561.7C643.6 560.8 644.1 560.4 644.7 560.0C645.4 559.6 646.1 559.2 646.6 559.1C647.1 559.0 647.5 559.2 647.9 559.1C648.3 559.0 648.7 559.4 649.2 558.7C649.7 558.1 650.5 556.4 651.1 555.2C651.8 554.0 652.5 552.4 653.1 551.3C653.8 550.2 654.4 549.2 655.0 548.4C655.6 547.6 656.4 546.8 657.0 546.6C657.6 546.4 658.0 546.8 658.4 547.1C658.8 547.5 659.0 547.9 659.6 548.7C660.2 549.6 661.3 551.1 662.2 552.2C663.1 553.3 664.0 555.3 664.8 555.2C665.5 555.1 666.1 553.0 666.7 551.7C667.4 550.4 668.1 548.6 668.7 547.4C669.4 546.2 670.0 545.4 670.6 544.7C671.2 544.0 672.0 543.1 672.6 543.0C673.2 542.9 673.7 543.7 674.2 544.2C674.7 544.7 675.2 545.9 675.7 546.1C676.2 546.3 676.6 545.8 677.0 545.4C677.4 545.0 677.8 544.6 678.3 543.5C678.8 542.4 679.4 540.4 680.0 538.7C680.6 537.0 681.1 535.0 681.7 533.1C682.3 531.2 683.0 529.2 683.6 527.2C684.2 525.2 685.1 521.8 685.6 521.4C686.1 521.0 686.5 523.5 686.9 524.7C687.3 525.9 687.7 527.6 688.2 528.4C688.7 529.3 689.3 529.5 689.8 529.8C690.3 530.1 690.8 530.3 691.3 530.0C691.8 529.7 692.2 529.1 692.6 528.2C693.0 527.3 693.4 526.0 693.9 524.8C694.4 523.6 695.1 522.2 695.8 521.2C696.4 520.2 697.1 519.2 697.8 519.1C698.4 519.0 699.1 520.1 699.7 520.4C700.4 520.7 701.1 521.6 701.7 520.9C702.4 520.2 703.0 517.9 703.6 516.2C704.2 514.5 704.8 512.2 705.6 510.5C706.4 508.8 707.3 507.2 708.2 505.7C709.1 504.2 709.9 502.7 710.8 501.4C711.7 500.1 712.5 499.0 713.4 498.0C714.3 497.0 715.1 496.0 716.0 495.6C716.9 495.1 717.7 495.4 718.6 495.3C719.5 495.2 720.3 495.6 721.2 494.9C722.1 494.2 722.9 492.5 723.8 491.2C724.7 489.9 725.4 488.5 726.4 487.1C727.4 485.7 728.5 484.3 729.6 483.0C730.7 481.7 731.8 480.5 732.9 479.2C734.0 477.9 735.1 476.5 736.2 475.2C737.3 473.9 738.4 472.5 739.5 471.4C740.6 470.3 741.6 469.5 742.7 468.7C743.8 467.9 744.9 467.2 746.0 466.7C747.1 466.2 748.1 465.9 749.2 465.7C750.3 465.5 751.4 465.4 752.5 465.4C753.6 465.4 754.6 465.5 755.7 465.7C756.8 465.9 757.9 466.3 759.0 466.7C760.1 467.1 761.1 467.6 762.2 468.2C763.3 468.8 764.5 469.4 765.5 470.1C766.5 470.8 767.2 471.6 768.1 472.5C769.0 473.4 769.8 474.3 770.7 475.3C771.6 476.3 772.4 477.6 773.3 478.7C774.2 479.8 774.8 480.9 775.9 481.8C777.0 482.7 778.5 483.4 779.8 484.0C781.1 484.6 782.4 484.8 783.7 485.7C785.0 486.6 786.3 488.1 787.6 489.4C788.9 490.7 790.2 492.2 791.5 493.6C792.8 495.0 794.1 496.5 795.4 498.0C796.7 499.5 798.0 501.1 799.3 502.7C800.6 504.3 801.9 506.1 803.2 507.8C804.5 509.5 805.8 511.1 807.1 513.1C808.4 515.1 809.7 517.5 811.0 519.7C812.3 521.9 813.6 524.1 814.9 526.1C816.2 528.1 817.5 529.7 818.8 531.4C820.1 533.1 821.4 534.8 822.7 536.5C824.0 538.2 825.3 540.0 826.6 541.7C827.9 543.4 829.0 545.0 830.5 546.9C832.0 548.9 834.0 551.2 835.7 553.4C837.5 555.6 839.2 557.8 841.0 559.9C842.8 562.0 844.5 563.9 846.2 565.8C847.9 567.8 849.7 569.7 851.4 571.6C853.1 573.5 854.9 575.2 856.6 577.0C858.3 578.8 860.1 580.6 861.8 582.1C863.5 583.6 865.3 584.9 867.0 586.2C868.7 587.5 870.5 588.7 872.2 589.9C873.9 591.1 875.7 592.1 877.4 593.2C879.1 594.3 880.9 595.4 882.6 596.4C884.3 597.4 886.1 598.4 887.8 599.3C889.5 600.2 891.0 601.1 893.0 602.1C895.0 603.1 897.2 604.4 899.5 605.5C901.8 606.6 905.3 608.3 906.5 608.9" stroke="#CBCB46" stroke-width="1.700" stroke-opacity=".9"/>
</g></svg>
<span class="t" style="left:70.82px;top:134px;font-size:16px;line-height:17px;transform:scaleX(0.9813);">Magnitude(ohms)</span>
<span class="t" style="left:838.61px;top:134px;font-size:16px;line-height:17px;transform:scaleX(0.9938);">Phase (°)</span>
<span class="t" style="left:29.22px;top:146px;font-size:16px;line-height:17px;transform:scaleX(0.8795);">212.0</span>
<span class="t" style="left:29.2px;top:197px;font-size:16px;line-height:17px;transform:scaleX(0.9026);">190.8</span>
<span class="t" style="left:29.2px;top:248px;font-size:16px;line-height:17px;transform:scaleX(0.9026);">169.6</span>
<span class="t" style="left:29.22px;top:299px;font-size:16px;line-height:17px;transform:scaleX(0.8795);">148.4</span>
<span class="t" style="left:29.2px;top:350px;font-size:16px;line-height:17px;transform:scaleX(0.9026);">127.2</span>
<span class="t" style="left:29.22px;top:400px;font-size:16px;line-height:17px;transform:scaleX(0.8795);">106.0</span>
<span class="t" style="left:37.19px;top:451px;font-size:16px;line-height:17px;transform:scaleX(0.9069);">84.8</span>
<span class="t" style="left:37.19px;top:502px;font-size:16px;line-height:17px;transform:scaleX(0.9069);">63.6</span>
<span class="t" style="left:38.1px;top:553px;font-size:16px;line-height:17px;transform:scaleX(0.8484);">42.4</span>
<span class="t" style="left:37.19px;top:604px;font-size:16px;line-height:17px;transform:scaleX(0.9069);">21.2</span>
<span class="t" style="left:45.12px;top:655px;font-size:16px;line-height:17px;transform:scaleX(0.8762);">0.0</span>
<span class="t" style="left:915.08px;top:146px;font-size:16px;line-height:17px;transform:scaleX(0.9200);">90.0</span>
<span class="t" style="left:916px;top:197px;font-size:16px;line-height:17px;transform:scaleX(0.8903);">45.0</span>
<span class="t" style="left:919.68px;top:248px;font-size:16px;line-height:17px;transform:scaleX(0.9238);">0.0</span>
<span class="t" style="left:910.98px;top:299px;font-size:16px;line-height:17px;transform:scaleX(0.9200);">-45.0</span>
<span class="t" style="left:910.98px;top:350px;font-size:16px;line-height:17px;transform:scaleX(0.9200);">-90.0</span>
<span class="t" style="left:911.9px;top:408px;font-size:16px;line-height:17px;transform:scaleX(0.8775);">Avg:0</span>
<span class="t" style="left:911.66px;top:592px;font-size:16px;line-height:17px;transform:scaleX(1.0429);">L</span>
<span class="t" style="left:911.7px;top:608px;font-size:16px;line-height:17px;">I</span>
<span class="t" style="left:911.67px;top:624px;font-size:16px;line-height:17px;transform:scaleX(1.0273);">M</span>
<span class="t" style="left:911.7px;top:640px;font-size:16px;line-height:17px;">P</span>
<span class="t" style="left:64.01px;top:671px;font-size:16px;line-height:17px;transform:scaleX(0.7875);">10</span>
<span class="t" style="left:138.11px;top:671px;font-size:16px;line-height:17px;transform:scaleX(0.8938);">20</span>
<span class="t" style="left:238.27px;top:671px;font-size:16px;line-height:17px;transform:scaleX(0.9250);">50</span>
<span class="t" style="left:311.62px;top:671px;font-size:16px;line-height:17px;transform:scaleX(0.8760);">100</span>
<span class="t" style="left:387.2px;top:671px;font-size:16px;line-height:17px;transform:scaleX(0.9040);">200</span>
<span class="t" style="left:487.69px;top:671px;font-size:16px;line-height:17px;transform:scaleX(0.9120);">500</span>
<span class="t" style="left:570.96px;top:671px;font-size:16px;line-height:17px;transform:scaleX(0.8438);">1k</span>
<span class="t" style="left:646.11px;top:671px;font-size:16px;line-height:17px;transform:scaleX(0.8875);">2k</span>
<span class="t" style="left:746.59px;top:671px;font-size:16px;line-height:17px;transform:scaleX(0.9125);">5k</span>
<span class="t" style="left:819.7px;top:671px;font-size:16px;line-height:17px;transform:scaleX(0.9000);">10k</span>
<span class="t" style="left:894.75px;top:671px;font-size:16px;line-height:17px;transform:scaleX(0.9458);">20k</span>
<span class="t" style="left:69.48px;top:693px;font-size:16px;line-height:17px;transform:scaleX(0.9169);">Cursor: 20480.0 Hz, 22.15 Ohm, 61.0 deg</span>
<span class="t" style="left:808.37px;top:693px;font-size:16px;line-height:17px;transform:scaleX(0.9269);">Frequency(Hz)</span>
<div id="dialog" style="left:248px;top:104px;width:471px;height:365px;background:#0831D9;border-radius:8px 8px 0 0;overflow:hidden">
<div style="left:0;top:0;width:471px;height:29px;background:linear-gradient(#0A50C8 0,#2E8AFA 1.200px,#3290FF 2.200px,#1470F0 3.800px,#0458E4 6px,#0055E1 10px,#0058E6 16px,#0064F5 21.500px,#0060EE 24.500px,#0050D8 26.500px,#003CB4 28.200px,#0034A8 29px)"></div>
<div style="left:0;top:29px;width:3px;height:336px;background:linear-gradient(90deg,#2452CC,#2C60DC 50%,#2A5CD8)"></div>
<div style="left:468px;top:29px;width:3px;height:336px;background:linear-gradient(90deg,#0C3098 0,#0A2A8C 1.500px,#041450 3px)"></div>
<div style="left:468px;top:29px;width:3px;height:21px;background:linear-gradient(90deg,#0A4AD0,#0840C0 50%,#0634A8)"></div>
<div style="left:0;top:362px;width:471px;height:3px;background:linear-gradient(#1C44C8 0,#10309E 1.500px,#06185C 3px)"></div>
<div style="left:0;top:362px;width:3px;height:3px;background:#1E48C0"></div>
<span class="t sh" style="left:5.52px;top:9px;font-size:13px;line-height:15px;font-weight:bold;color:#fff;transform:scaleX(0.9845);">Loudspeaker Parameters - Added Mass Method</span>
<div style="left:445px;top:5px;width:21px;height:21px;border:1px solid #fff;border-radius:3px;background:radial-gradient(circle at 30% 30%,#E8846A,#D8502E 55%,#C03A18)"></div>
<svg style="left:445px;top:5px" width="21" height="21"><path d="M5.800 5.800l9.400 9.400M15.200 5.800l-9.400 9.400" stroke="#fff" stroke-width="2.100"/></svg>
<div id="client" style="left:3px;top:29px;width:465px;height:333px;background:#ECE9D8;box-shadow:inset 1px 0 0 #E3EAFA,inset -1px 0 0 #EEF1FA,inset 0 -1px 0 #F2F5FD,inset 0 1px 0 #E6EEFC">
<div class="sunk" style="left:9px;top:11px;width:198px;height:315px;background:#fff"></div>
<div style="left:188px;top:13px;width:16px;height:311px;background:linear-gradient(90deg,#F3F1EC,#FEFEFB 60%,#F6F5F0)"></div>
<div style="left:189px;top:14px;width:15px;height:16px;border:1px solid #E6E4DB;border-radius:2px;background:#F3F2EC;box-shadow:1px 1px 0 #E0DED2"></div>
<svg style="left:189px;top:14px" width="15" height="16"><path d="M3.500 10l4-4 4 4" fill="none" stroke="#C9C7BA" stroke-width="2"/></svg>
<div style="left:189px;top:307px;width:15px;height:16px;border:1px solid #E6E4DB;border-radius:2px;background:#F3F2EC;box-shadow:1px 1px 0 #E0DED2"></div>
<svg style="left:189px;top:307px" width="15" height="16"><path d="M3.500 6l4 4 4-4" fill="none" stroke="#C9C7BA" stroke-width="2"/></svg>
<span class="t" style="left:14.3px;top:15px;font-size:11px;line-height:12px;transform:scaleX(0.9607);">Thiele-Small parameters:</span>
<span class="t" style="left:14.3px;top:41px;font-size:11px;line-height:12px;transform:scaleX(1.0143);">Fs  = 27.29 Hz</span>
<span class="t" style="left:14.3px;top:54px;font-size:11px;line-height:12px;transform:scaleX(1.0294);">Re  = 11.50 ohms[dc]</span>
<span class="t" style="left:14.3px;top:67px;font-size:11px;line-height:12px;transform:scaleX(1.0120);">Le  = 7579.83 uH</span>
<span class="t" style="left:14.3px;top:80px;font-size:11px;line-height:12px;transform:scaleX(1.0112);">L2  = 54601.54 uH</span>
<span class="t" style="left:14.3px;top:93px;font-size:11px;line-height:12px;">R2  = 27.05 ohms</span>
<span class="t" style="left:14.3px;top:106px;font-size:11px;line-height:12px;transform:scaleX(1.0625);">Qt  = 0.25</span>
<span class="t" style="left:14.3px;top:119px;font-size:11px;line-height:12px;transform:scaleX(1.0185);">Qes = 0.27</span>
<span class="t" style="left:14.3px;top:132px;font-size:11px;line-height:12px;transform:scaleX(0.9825);">Qms = 3.81</span>
<span class="t" style="left:14.3px;top:145px;font-size:11px;line-height:12px;transform:scaleX(0.9896);">Mms = 58.30 grams</span>
<span class="t" style="left:14.3px;top:158px;font-size:11px;line-height:12px;">Rms = 2.626776 kg/s</span>
<span class="t" style="left:14.3px;top:171px;font-size:11px;line-height:12px;">Cms = 0.000584 m/N</span>
<span class="t" style="left:14.3px;top:184px;font-size:11px;line-height:12px;transform:scaleX(1.0111);">Vas = 599.52 liters</span>
<span class="t" style="left:14.3px;top:197px;font-size:11px;line-height:12px;transform:scaleX(1.0357);">Sd= 855.30 cm^2</span>
<span class="t" style="left:14.3px;top:210px;font-size:11px;line-height:12px;transform:scaleX(0.9895);">Bl  = 20.804155 Tm</span>
<span class="t" style="left:14.3px;top:223px;font-size:11px;line-height:12px;transform:scaleX(1.0538);">ETA = 4.41 %</span>
<span class="t" style="left:14.3px;top:236px;font-size:11px;line-height:12px;">Lp(2.83V/1m) = 96.97 dB</span>
<span class="t" style="left:14.3px;top:262px;font-size:11px;line-height:12px;transform:scaleX(0.9709);">Added Mass Method:</span>
<span class="t" style="left:14.3px;top:275px;font-size:11px;line-height:12px;transform:scaleX(0.9813);">Added mass = 96.00 grams</span>
<span class="t" style="left:14.3px;top:288px;font-size:11px;line-height:12px;transform:scaleX(0.9949);">Diameter= 33.00 cm</span>
<div style="left:228px;top:17px;width:226px;height:136px;border:1px solid #ACA899;box-shadow:inset 1px 1px 0 #fff,1px 1px 0 #fff"></div>
<div style="left:234px;top:12px;width:55px;height:12px;background:#ECE9D8"></div>
<span class="t" style="left:235.69px;top:12px;font-size:11px;line-height:12px;transform:scaleX(1.0120);">User Input</span>
<span class="t" style="left:242.4px;top:42px;font-size:11px;line-height:12px;transform:scaleX(0.9518);">Voice coil Resistance (ohms)</span>
<span class="t" style="left:241.42px;top:79px;font-size:11px;line-height:12px;transform:scaleX(0.9770);">Membrane diameter (cm)</span>
<span class="t" style="left:242.4px;top:115px;font-size:11px;line-height:12px;transform:scaleX(0.9753);">Added mass (g)</span>
<div class="sunk" style="left:386px;top:39px;width:50px;height:20px;background:#fff"></div>
<span class="t" style="left:390.87px;top:43px;font-size:11px;line-height:12px;transform:scaleX(1.1263);">11.5</span>
<div class="sunk" style="left:386px;top:72px;width:47px;height:22px;background:#fff"></div>
<span class="t" style="left:390.61px;top:76px;font-size:11px;line-height:12px;transform:scaleX(1.0909);">33</span>
<div class="sunk" style="left:387px;top:111px;width:47px;height:22px;background:#fff"></div>
<span class="t" style="left:392.4px;top:115px;font-size:11px;line-height:12px;">96</span>
<div class="btnd" style="left:236px;top:234px;width:110px;height:26px"></div>
<span class="t" style="left:256.66px;top:241px;font-size:11px;line-height:12px;transform:scaleX(0.9391);">Calculate TSP</span>
<div class="btn" style="left:236px;top:271px;width:111px;height:23px"></div>
<span class="t" style="left:248.64px;top:276px;font-size:11px;line-height:12px;transform:scaleX(0.9612);">Export in CVS file</span>
<div class="btn" style="left:236px;top:302px;width:110px;height:23px"></div>
<span class="t" style="left:246.71px;top:307px;font-size:11px;line-height:12px;transform:scaleX(0.9942);">Copy to Clipboard</span>
<div class="btn" style="left:380px;top:268px;width:75px;height:23px"></div>
<span class="t" style="left:399.84px;top:273px;font-size:11px;line-height:12px;transform:scaleX(0.9606);">Cancel</span>
<div class="btn" style="left:380px;top:302px;width:75px;height:23px"></div>
<span class="t" style="left:409.9px;top:307px;font-size:11px;line-height:12px;transform:scaleX(0.8800);">OK</span>
</div>
</div>
<div id="taskbar" style="left:0;top:734px;width:1024px;height:34px;background:linear-gradient(#1C58BE 0,#286CE0 1px,#2A6EE2 4px,#3A82EC 5px,#3780EA 7px,#2C6CE4 9px,#2A65E2 12px,#2860DE 24px,#2459D4 29px,#1F50C4 32px,#1A46B0 34px)">
<div style="left:0;top:4px;width:96px;height:30px;border-radius:0 12px 12px 0/0 15px 15px 0;background:linear-gradient(#3A963A 0,#58B458 2.500px,#409E40 6px,#389638 17px,#308A30 25px,#2A7A2A 30px);box-shadow:inset 0 1px 1px #7FCB7F,inset -2px 0 3px #2A6A2A,1px 0 2px #1A3F9A"></div>
<svg style="left:9px;top:9px" width="21" height="19" viewBox="0 0 21 19"><path d="M3 2.500c2-1.300 4-1.300 6.500 0l-1.200 6c-2.300-1.200-4.300-1.200-6.300 0z" fill="#E8632B"/><path d="M10.800 3.200c2.300 1.200 4.300 1.200 6.500 0l-1.400 6c-2.200 1.200-4.200 1.200-6.400 0z" fill="#7FC23A"/><path d="M1.800 9.800c2-1.200 4-1.200 6.300 0l-1.300 6c-2.300-1.200-4.200-1.200-6.200 0z" fill="#4F86E0"/><path d="M9.200 10.500c2.200 1.200 4.200 1.200 6.400 0l-1.300 6c-2.200 1.200-4.200 1.200-6.400 0z" fill="#F0C030"/></svg>
<span class="t sh2" style="left:35.2px;top:8px;font-size:19px;line-height:21px;font-weight:bold;font-style:italic;color:#F2F6EA;transform:scaleX(0.8326);">пуск</span>
<div style="left:105px;top:11px;width:2px;height:2px;background:#1A44AA;box-shadow:1px 1px 0 #4C80E6"></div><div style="left:108px;top:14px;width:2px;height:2px;background:#1A44AA;box-shadow:1px 1px 0 #4C80E6"></div><div style="left:105px;top:17px;width:2px;height:2px;background:#1A44AA;box-shadow:1px 1px 0 #4C80E6"></div><div style="left:108px;top:20px;width:2px;height:2px;background:#1A44AA;box-shadow:1px 1px 0 #4C80E6"></div><div style="left:105px;top:23px;width:2px;height:2px;background:#1A44AA;box-shadow:1px 1px 0 #4C80E6"></div><div style="left:108px;top:26px;width:2px;height:2px;background:#1A44AA;box-shadow:1px 1px 0 #4C80E6"></div><div style="left:105px;top:29px;width:2px;height:2px;background:#1A44AA;box-shadow:1px 1px 0 #4C80E6"></div>
<div style="left:604px;top:11px;width:2px;height:2px;background:#1A44AA;box-shadow:1px 1px 0 #4C80E6"></div><div style="left:607px;top:14px;width:2px;height:2px;background:#1A44AA;box-shadow:1px 1px 0 #4C80E6"></div><div style="left:604px;top:17px;width:2px;height:2px;background:#1A44AA;box-shadow:1px 1px 0 #4C80E6"></div><div style="left:607px;top:20px;width:2px;height:2px;background:#1A44AA;box-shadow:1px 1px 0 #4C80E6"></div><div style="left:604px;top:23px;width:2px;height:2px;background:#1A44AA;box-shadow:1px 1px 0 #4C80E6"></div><div style="left:607px;top:26px;width:2px;height:2px;background:#1A44AA;box-shadow:1px 1px 0 #4C80E6"></div><div style="left:604px;top:29px;width:2px;height:2px;background:#1A44AA;box-shadow:1px 1px 0 #4C80E6"></div>
<div style="left:865px;top:11px;width:2px;height:2px;background:#1A44AA;box-shadow:1px 1px 0 #4C80E6"></div><div style="left:868px;top:14px;width:2px;height:2px;background:#1A44AA;box-shadow:1px 1px 0 #4C80E6"></div><div style="left:865px;top:17px;width:2px;height:2px;background:#1A44AA;box-shadow:1px 1px 0 #4C80E6"></div><div style="left:868px;top:20px;width:2px;height:2px;background:#1A44AA;box-shadow:1px 1px 0 #4C80E6"></div><div style="left:865px;top:23px;width:2px;height:2px;background:#1A44AA;box-shadow:1px 1px 0 #4C80E6"></div><div style="left:868px;top:26px;width:2px;height:2px;background:#1A44AA;box-shadow:1px 1px 0 #4C80E6"></div><div style="left:865px;top:29px;width:2px;height:2px;background:#1A44AA;box-shadow:1px 1px 0 #4C80E6"></div>
<svg style="left:118px;top:11px" width="16" height="16" viewBox="0 0 16 16"><path d="M2 2.500h9l3 2v7l-2 2.500H3l-2-2V4z" fill="#F2F6FC" stroke="#9CB4DC" stroke-width=".800"/><path d="M9.500 5C8 3.500 5 4 5 7.500s3 4 4.500 2.500V7.500H7.500" fill="none" stroke="#2858B0" stroke-width="1.600"/><path d="M10 5.500l5-1-2.500 3.500z" fill="#D03828"/></svg>
<svg style="left:141px;top:11px" width="16" height="16" viewBox="0 0 16 16"><path d="M12.400 12A5 5 0 1 1 13.600 8.800H5" fill="none" stroke="#14389C" stroke-width="3.600"/><path d="M12.400 12A5 5 0 1 1 13.600 8.800H5" fill="none" stroke="#44B0F4" stroke-width="2.100"/><path d="M2.200 15.500C-.8 11.500 5 3 15 1.300c-5.500 2.300-11 7.700-11.400 11.700.2 1 .8 1.500 1.400 2-.8.800-2 .9-2.800.5z" fill="#E8D860" stroke="#8C7C50" stroke-width=".500"/></svg>
<svg style="left:164px;top:11px" width="16" height="16" viewBox="0 0 16 16"><path d="M3.500 2l8-.5v12l-8 1.500z" fill="#F6F8FC" stroke="#3458A8" stroke-width=".900"/><path d="M5 5.500l4-.5M5 8l3-.4" stroke="#C8C89C" stroke-width="1.200"/><path d="M6 11.500l3.500-3.500 6-2.500" fill="none" stroke="#3C64C0" stroke-width="1.800"/><path d="M5 12.500l1.500-2 1 1.500z" fill="#E8D060"/></svg>
<svg style="left:187px;top:11px" width="16" height="16" viewBox="0 0 16 16"><rect x=".5" y=".5" width="15" height="15" fill="#EEF3FC" stroke="#B8CAEC"/><rect x="1.500" y="1.500" width="13" height="11" fill="#DCE6F8"/><path d="M3 4l1.800 7.500L7.800 5.500l1.200 6L13.500 4" fill="none" stroke="#3858B8" stroke-width="2" stroke-linejoin="round"/></svg>
<svg style="left:210px;top:11px" width="16" height="16" viewBox="0 0 16 16"><rect x=".5" y=".5" width="15" height="15" fill="#E8F2E0" stroke="#88B080"/><rect x="1.500" y="1.500" width="13" height="11" fill="#D4E8CC"/><path d="M3.500 3.500l8.500 8M12.500 3.500L4 11.500" stroke="#2C9A3C" stroke-width="2.400"/></svg>
<svg style="left:233px;top:11px" width="16" height="16" viewBox="0 0 16 16"><rect x=".5" y=".5" width="15" height="15" fill="#F0B8A4" stroke="#D88870"/><rect x="2" y="3" width="12" height="10" fill="#FBE4D8"/><circle cx="6.500" cy="8.500" r="3.300" fill="#E8683C"/><path d="M6.500 8.500V5.200a3.300 3.300 0 0 1 3.300 3.300z" fill="#B83818"/><path d="M11.500 6.500h2M11.500 8.500h2M11.500 10.500h2" stroke="#C86848" stroke-width="1"/><path d="M2 2.500h12" stroke="#D86848" stroke-width="1.400"/></svg>
<svg style="left:256px;top:11px" width="16" height="16" viewBox="0 0 16 16"><ellipse cx="8" cy="9" rx="7" ry="3.800" fill="#C8CCD4"/><ellipse cx="8.500" cy="7.800" rx="5" ry="3" fill="#DCDFE6"/></svg>
<svg style="left:279px;top:11px" width="16" height="16" viewBox="0 0 16 16"><rect width="16" height="16" fill="#fff"/><rect x="1.500" y="1.500" width="13" height="13" fill="#000"/><ellipse cx="8" cy="8" rx="5.800" ry="5.200" fill="#F0E858"/><path d="M2 6.500c1.500-1.500 2.700-1.300 3.500.3l.9-2.300.8 1.300h1.600l.8-1.300.9 2.300c.8-1.600 2-1.800 3.500-.3-.3 2.200-1.500 3.500-3.200 3.700-.5.400-1.300 1.300-2.800 2.800-1.500-1.500-2.300-2.400-2.800-2.800C3.500 10 2.300 8.700 2 6.500z" fill="#000"/><path d="M0 1h16M0 15h16" stroke="#2A62DC" stroke-width="1" stroke-dasharray="1 1.500" stroke-dashoffset=".5"/><path d="M.5 0v16M15.500 0v16" stroke="#2A62DC" stroke-width="1" stroke-dasharray="1 1.500"/></svg>
<svg style="left:302px;top:11px" width="16" height="16" viewBox="0 0 16 16"><path d="M1.500 6l5-3.500 3 1.500v3z" fill="#F4F8FC"/><path d="M1.500 6v6.500l5 2.500V8.500z" fill="#E4ECF8"/><path d="M6.500 8.500l7-3.500v7l-7 3z" fill="#2C84D8"/><path d="M8 3l4-1.500 3 1.500v7.500l-1.500.8V5z" fill="#F0F4FA"/><path d="M3 8.500l3 1.300v2.500L3 11z" fill="#2C84D8"/></svg>
<svg style="left:325px;top:11px" width="16" height="16" viewBox="0 0 16 16"><path d="M3 13.500c-.5-3 2-3.500 4.500-4.500S9 6 10.500 5s2.500-.8 2.800-2.300" fill="none" stroke="#0A1038" stroke-width="3" stroke-linecap="round"/><circle cx="13" cy="3" r="2" fill="#0A1038"/><circle cx="3.200" cy="13" r="1.900" fill="#0A1038"/></svg>
<svg style="left:348px;top:11px" width="16" height="16" viewBox="0 0 16 16"><rect x="7" y="0" width="9" height="12" fill="#142488"/><path d="M5 4c1.200-3 2.300-3 3.500 0s2.300 3 3.500 0 2.300-3 3.500 0" fill="none" stroke="#fff" stroke-width="1.100"/><path d="M9 7.500h3v2h4" fill="none" stroke="#58B8F8" stroke-width="1.100"/><circle cx="5.500" cy="10.500" r="5" fill="#E01414"/><circle cx="4" cy="9" r="1.500" fill="#F06060"/></svg>
<svg style="left:371px;top:11px" width="16" height="16" viewBox="0 0 16 16"><rect y="1" width="16" height="14" fill="#D81C1C"/><text x="8" y="10.500" font-size="9" font-weight="bold" text-anchor="middle" fill="#fff" font-family="Liberation Sans, sans-serif" textLength="14" lengthAdjust="spacingAndGlyphs">ARES</text><path d="M1 12.500h14" stroke="#fff" stroke-width="1.200"/></svg>
<svg style="left:394px;top:11px" width="16" height="16" viewBox="0 0 16 16"><rect y="2" width="16" height="12" fill="#1414C4"/><text x="8" y="12" font-size="11" font-weight="bold" text-anchor="middle" fill="#fff" font-family="Liberation Sans, sans-serif" textLength="13" lengthAdjust="spacingAndGlyphs">isis</text></svg>
<svg style="left:417px;top:11px" width="16" height="16" viewBox="0 0 16 16"><rect width="16" height="15" fill="#2C58A8"/><rect x="0" y="0" width="16" height="7" fill="#3868B8"/><text x="8" y="11" font-size="10" font-weight="bold" text-anchor="middle" fill="#EEF4FF" font-family="Liberation Sans, sans-serif">Ps</text></svg>
<svg style="left:440px;top:11px" width="16" height="16" viewBox="0 0 16 16"><path d="M3 1.500l9-1 1 14-9 1.500z" fill="#B4D0F4" stroke="#6C98D8" stroke-width=".800"/><path d="M4.500 3l6.500-.7.200 2.500-6.500.8z" fill="#EEF4FF"/><path d="M5 8l6.500-.8M5.200 10.200l6.500-.8M5.400 12.400l6.500-.8" stroke="#6C94D4" stroke-width="1.300" stroke-dasharray="1.500 .9"/></svg>
<svg style="left:463px;top:11px" width="16" height="16" viewBox="0 0 16 16"><circle cx="8" cy="8" r="7.500" fill="#E8ECF0"/><path d="M8 .5a7.500 7.500 0 0 1 7.500 7.500H8z" fill="#58A838"/><path d="M15.500 8a7.500 7.500 0 0 1-7.500 7.500V8z" fill="#E8B830"/><path d="M8 15.500a7.500 7.500 0 0 1-7.500-7.500H8z" fill="#3870D8"/><path d="M.5 8a7.500 7.500 0 0 1 7.500-7.500V8z" fill="#E86838"/><circle cx="8" cy="8" r="4.600" fill="#F4F4F0"/><path d="M6 4.800l5.500 3.200L6 11.200z" fill="#181818"/></svg>
<svg style="left:486px;top:11px" width="16" height="16" viewBox="0 0 16 16"><path d="M1 4.500h3.500l1.500-2h3l1 2H15v9.500H1z" fill="#20286C"/><path d="M2 5.500h4l1-2h2v3H4v6.500H2z" fill="#E8ECF4"/><circle cx="8.500" cy="9.500" r="3.600" fill="#C8D0E0"/><circle cx="8.500" cy="9.500" r="2.400" fill="#58B868"/><circle cx="8.500" cy="9.500" r="1.100" fill="#183048"/></svg>
<svg style="left:509px;top:11px" width="16" height="16" viewBox="0 0 16 16"><rect width="16" height="16" fill="#C41010"/><path d="M6 0h5L5.500 16H3z" fill="#780814"/><path d="M0 0h16v1.500H0z" fill="#A80C0C"/></svg>
<svg style="left:532px;top:11px" width="16" height="16" viewBox="0 0 16 16"><circle cx="8" cy="8" r="8" fill="#1E6E1A"/><circle cx="8" cy="8" r="6.300" fill="#48B42C"/><ellipse cx="8" cy="8" rx="2.300" ry="6" fill="#0C3408"/><ellipse cx="8" cy="8" rx=".8" ry="4" fill="#3C9C28"/></svg>
<svg style="left:555px;top:11px" width="16" height="16" viewBox="0 0 16 16"><g fill="#38E028"><circle cx="8" cy="3" r="2.400"/><circle cx="12.300" cy="5.200" r="2.400"/><circle cx="12.300" cy="10.600" r="2.400"/><circle cx="8" cy="13" r="2.400"/><circle cx="3.700" cy="5.200" r="2.400"/></g><circle cx="3.700" cy="10.600" r="2.400" fill="#E02818"/><circle cx="8" cy="8" r="2.300" fill="#E8F060"/></svg>
<svg style="left:578px;top:11px" width="16" height="16" viewBox="0 0 16 16"><path d="M12.500 13.200A6.800 6.800 0 1 1 14.800 8c0 3.500-4 3.500-4 .5V5" fill="none" stroke="#E48C6C" stroke-width="1.900"/><circle cx="8" cy="8" r="2.700" fill="none" stroke="#E48C6C" stroke-width="1.800"/></svg>
<div style="left:615px;top:8px;width:79px;height:23px;border-radius:3px;background:linear-gradient(#5A98F8 0,#4A8AF2 3px,#4484F0 16px,#3C78E6 23px);box-shadow:inset 1px 1px 0 #78AEFC,inset -1px -1px 0 #2C5CC4"></div>
<svg style="left:624px;top:11px" width="16" height="16" viewBox="0 0 16 16"><path d="M12.400 12A5 5 0 1 1 13.600 8.800H5" fill="none" stroke="#14389C" stroke-width="3.600"/><path d="M12.400 12A5 5 0 1 1 13.600 8.800H5" fill="none" stroke="#44B0F4" stroke-width="2.100"/><path d="M2.200 15.500C-.8 11.500 5 3 15 1.300c-5.500 2.300-11 7.700-11.400 11.700.2 1 .8 1.500 1.400 2-.8.800-2 .9-2.800.5z" fill="#E8D860" stroke="#8C7C50" stroke-width=".500"/></svg>
<span class="t" style="left:642.84px;top:13px;font-size:11px;line-height:12px;color:#fff;transform:scaleX(1.0647);">Элик…</span>
<div style="left:696px;top:8px;width:79px;height:23px;border-radius:3px;background:linear-gradient(#5A98F8 0,#4A8AF2 3px,#4484F0 16px,#3C78E6 23px);box-shadow:inset 1px 1px 0 #78AEFC,inset -1px -1px 0 #2C5CC4"></div>
<svg style="left:705px;top:11px" width="16" height="16" viewBox="0 0 16 16"><rect width="16" height="16" fill="#fff"/><rect x="1.500" y="1.500" width="13" height="13" fill="#000"/><ellipse cx="8" cy="8" rx="5.800" ry="5.200" fill="#F0E858"/><path d="M2 6.500c1.500-1.500 2.700-1.300 3.500.3l.9-2.300.8 1.300h1.600l.8-1.300.9 2.300c.8-1.600 2-1.800 3.500-.3-.3 2.200-1.500 3.500-3.200 3.700-.5.400-1.300 1.300-2.800 2.800-1.500-1.500-2.300-2.400-2.800-2.800C3.500 10 2.300 8.700 2 6.500z" fill="#000"/><path d="M0 1h16M0 15h16" stroke="#2A62DC" stroke-width="1" stroke-dasharray="1 1.500" stroke-dashoffset=".5"/><path d="M.5 0v16M15.500 0v16" stroke="#2A62DC" stroke-width="1" stroke-dasharray="1 1.500"/></svg>
<span class="t" style="left:725.5px;top:13px;font-size:11px;line-height:12px;color:#fff;transform:scaleX(0.9688);">The …</span>
<div style="left:776px;top:7px;width:80px;height:24px;border-radius:3px;background:#1E52B7;box-shadow:inset 1px 1px 2px #143C8C,inset -1px -1px 0 #2F64C8"></div>
<div style="left:787px;top:12px;width:16px;height:16px;background:#C9C7BE"></div>
<svg style="left:787px;top:12px" width="16" height="16" viewBox="0 0 16 16"><path d="M6.800 5.600C4.600 5.400 5.400 8 4.300 8.500 5.400 9.200 5.200 10.400 6.400 11H4.400v1.200H7.300V10.600M9.200 5.600c2.200-.2 1.400 2.400 2.500 2.900-1.100.7-.9 1.900-2.100 2.500h2V12.200H8.700V10.600" fill="none" stroke="#000" stroke-width="1.400"/></svg>
<span class="t" style="left:806.9px;top:14px;font-size:11px;line-height:12px;color:#fff;transform:scaleX(1.0235);">Altek…</span>
<span class="t" style="left:877.6px;top:14px;font-size:11px;line-height:12px;color:#fff;">EN</span>
<div style="left:913px;top:4px;width:111px;height:30px;background:linear-gradient(#1C90E8 0,#2CA4F6 1.500px,#22A0F2 3px,#1A94EC 6px,#178CEA 20px,#1684E0 26px,#1274CC 30px);box-shadow:inset 1px 0 0 #1058B8"></div>
<div style="left:905px;top:10px;width:18px;height:18px;border-radius:9px;background:radial-gradient(circle at 40% 35%,#6CB8FA,#2A80EC 60%,#1A60D0);box-shadow:0 0 0 1px rgba(140,195,250,.55)"></div>
<svg style="left:905px;top:10px" width="18" height="18"><path d="M10.500 5.500l-3.500 3.500 3.500 3.500" fill="none" stroke="#fff" stroke-width="2.200"/></svg>
<svg style="left:924px;top:11px" width="16" height="16" viewBox="0 0 16 16"><circle cx="8" cy="8" r="8" fill="#2CC83C"/><circle cx="8" cy="8" r="5.500" fill="none" stroke="#0A5A18" stroke-width="1.500"/><circle cx="8" cy="8" r="2.200" fill="none" stroke="#0A5A18" stroke-width="1.500"/><path d="M10.500 6v3.500c1 1 2.500 0 2.500-1.500" fill="none" stroke="#0A5A18" stroke-width="1.300"/></svg>
<svg style="left:943px;top:11px" width="16" height="16" viewBox="0 0 16 16"><rect x=".5" y=".5" width="15" height="15" rx="3" fill="#E8EEF8" stroke="#fff"/><path d="M2 6h3l4-3.500v11L5 10H2z" fill="#2868D0"/><path d="M10.500 5c1.500 1.500 1.500 4.500 0 6M12.500 3.500c2.500 2.500 2.500 6.500 0 9" fill="none" stroke="#2868D0" stroke-width="1.300"/></svg>
<svg style="left:960px;top:11px" width="16" height="16" viewBox="0 0 16 16"><path d="M0 0h6v4l3.500-4H15l-5.500 6.500L12 9.500h3V15H8.500L6 11v4H0z" fill="#F4F4F4"/><path d="M1 1h4v6l5-6h3.500L8 7.500l2.500 4H7L5 8v6H1z" fill="#E41C24"/><path d="M8.500 8.500l3 3 1.500-1.500V14.500H8.500l1.500-1.500-3-3z" fill="#101010"/></svg>
<span class="t" style="left:985.7px;top:14px;font-size:11px;line-height:12px;color:#fff;transform:scaleX(1.0381);">0:29</span>
</div>
</div>
</body></html>
